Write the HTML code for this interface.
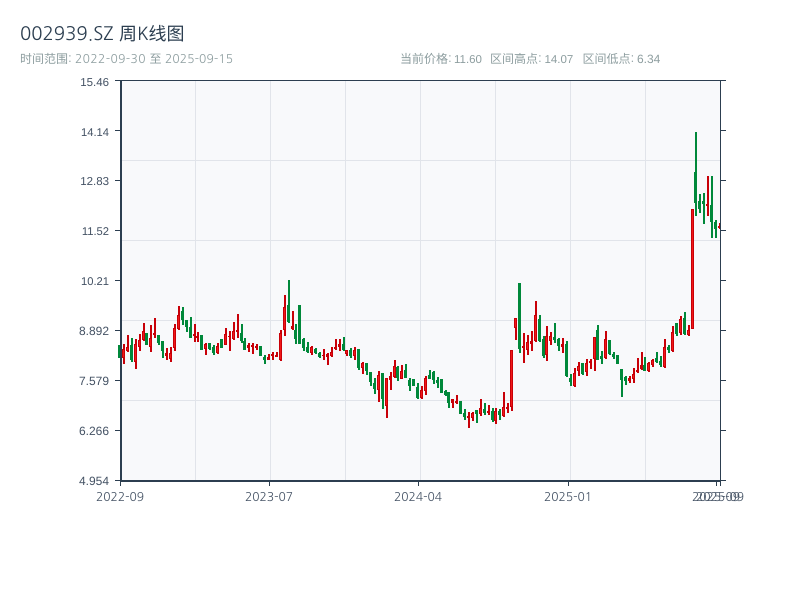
<!DOCTYPE html>
<html lang="zh"><head><meta charset="utf-8"><title>002939.SZ 周K线图</title>
<style>html,body{margin:0;padding:0;background:#fff}svg{display:block}text{font-family:NanumGothic,"WenQuanYi Zen Hei","Noto Sans CJK SC",sans-serif;text-rendering:geometricPrecision}text.n{font-family:"Liberation Sans",sans-serif}</style></head>
<body>
<svg width="800" height="600" viewBox="0 0 800 600" xmlns="http://www.w3.org/2000/svg">
<rect width="800" height="600" fill="#fff"/>
<rect x="120" y="80" width="600" height="400" fill="#f8f9fb"/>
<path d="M195.5 80V480M270.5 80V480M345.5 80V480M420.5 80V480M495.5 80V480M570.5 80V480M645.5 80V480M120 160.5H720M120 240.5H720M120 320.5H720M120 400.5H720" stroke="#e1e4ea" fill="none" shape-rendering="crispEdges"/>
<g fill="none" shape-rendering="crispEdges">
<path stroke="#00883a" stroke-width="2" d="M120 345V358M132 338V362M147 333V345M159 335V345M163 341V358M183 307V325M187 320V332M191 317V338M202 335V350M210 343V350M214 345V355M222 339V348M242 324V343M245 338V350M261 346V356M265 355V364M289 280V323M296 324V344M300 305V344M304 338V351M308 342V353M316 348V354M320 352V358M344 337V351M351 348V358M359 349V370M367 363V375M371 372V386M375 378V394M383 373V409M398 366V381M406 364V378M410 378V391M414 379V386M418 383V399M430 370V379M434 371V384M438 377V388M442 379V393M446 390V396M449 392V408M461 401V414M465 409V420M477 410V423M485 403V415M493 408V422M500 409V420M520 283V353M540 315V342M544 336V358M555 323V343M559 338V351M567 341V377M571 374V386M583 363V375M598 325V360M602 351V364M610 340V355M614 352V359M618 355V364M622 369V397M626 376V385M645 357V371M657 352V363M661 356V367M669 345V353M677 323V336M685 312V335M696 132V216M700 194V213M704 193V224M712 176V238M716 220V238"/>
<path stroke="#00883a" stroke-width="3" d="M119.500 345V358M131.500 345V360M146.500 333V345M158.500 335V343M162.500 341V351M182.500 311V320M186.500 320V327M190.500 327V338M201.500 335V350M209.500 343V349M213.500 347V353M221.500 339V348M241.500 333V341M244.500 341V350M260.500 346V356M264.500 357V360M288.500 305V322M295.500 330V339M299.500 305V344M303.500 339V348M307.500 347V352M315.500 349V353M319.500 353V357M343.500 344V350M350.500 350V356M358.500 349V368M366.500 363V371M370.500 372V382M374.500 383V389M382.500 373V399M397.500 367V378M405.500 370V378M409.500 380V386M413.500 379V386M417.500 387V398M429.500 375V379M433.500 372V380M437.500 380V383M441.500 379V393M445.500 391V395M448.500 392V403M460.500 401V414M464.500 413V417M476.500 410V414M484.500 409V413M492.500 411V420M499.500 411V415M519.500 283V349M539.500 319V341M543.500 339V356M554.500 337V340M558.500 339V346M566.500 344V376M570.500 378V382M582.500 363V374M597.500 330V360M601.500 356V359M609.500 340V354M613.500 354V357M617.500 355V364M621.500 369V380M625.500 377V381M644.500 365V371M656.500 358V362M660.500 361V365M668.500 347V350M676.500 323V334M684.500 318V334M695.500 172V203M699.500 201V209M703.500 201V204M711.500 205V222M715.500 222V229"/>
<path stroke="#c80008" stroke-width="2" d="M124 344V364M128 335V352M136 339V369M140 334V351M144 323V341M151 325V352M155 318V338M167 348V360M171 347V362M175 324V351M179 306V330M195 324V342M198 332V342M206 343V355M218 343V354M226 328V345M230 331V351M234 322V340M238 314V338M249 343V352M253 343V354M257 344V350M269 354V360M273 352V360M277 352V357M281 330V361M285 295V336M293 311V330M312 346V355M324 349V360M328 353V365M332 347V357M336 339V350M340 339V351M347 350V356M355 347V360M363 362V374M379 371V402M387 378V418M391 372V390M395 360V378M402 365V379M422 386V399M426 376V395M453 399V408M457 395V404M469 412V428M473 412V421M481 399V416M489 405V415M496 408V424M504 392V417M508 403V413M512 350V411M516 318V340M524 333V363M528 335V355M532 331V351M536 301V342M547 326V361M551 332V345M563 338V353M575 368V387M579 362V376M587 359V376M591 359V369M595 337V371M606 331V359M630 376V383M634 368V383M638 358V373M642 352V370M649 362V372M653 359V367M665 339V368M673 326V352M681 316V335M689 325V336M693 209V329M708 176V216M720 223V229"/>
<path stroke="#c80008" stroke-width="3" d="M123.500 349V358M127.500 347V351M135.500 344V362M139.500 340V347M143.500 331V340M150.500 338V347M154.500 333V335M166.500 353V356M170.500 353V359M174.500 328V348M178.500 315V329M194.500 334V336M197.500 336V338M205.500 344V349M217.500 346V353M225.500 334V345M229.500 336V337M233.500 331V339M237.500 330V332M248.500 345V348M252.500 345V347M256.500 346V348M268.500 357V360M272.500 354V356M276.500 355V357M280.500 333V360M284.500 307V330M292.500 326V329M311.500 347V353M323.500 355V356M327.500 354V357M331.500 352V356M335.500 347V349M339.500 344V347M346.500 350V354M354.500 350V356M362.500 363V368M378.500 375V390M386.500 378V406M390.500 376V380M394.500 366V377M401.500 371V379M421.500 390V398M425.500 378V391M452.500 399V403M456.500 401V403M468.500 416V418M472.500 413V418M480.500 408V414M488.500 411V413M495.500 411V421M503.500 407V416M507.500 407V409M511.500 350V407M515.500 318V328M523.500 346V348M527.500 342V350M531.500 341V344M535.500 315V341M546.500 336V355M550.500 336V341M562.500 344V347M574.500 373V386M578.500 366V371M586.500 363V372M590.500 361V363M594.500 337V359M605.500 339V358M629.500 378V381M633.500 374V379M637.500 370V372M641.500 365V369M648.500 363V371M652.500 360V365M664.500 347V367M672.500 332V351M680.500 319V333M688.500 330V335M692.500 209V329M707.500 204V206M719.500 226V228"/>
<path stroke="#f01818" stroke-width="1" d="M123.500 350V357M127.500 348V350M135.500 345V361M139.500 341V346M143.500 332V339M150.500 339V346M170.500 354V358M174.500 329V347M178.500 316V328M205.500 345V348M217.500 347V352M225.500 335V344M233.500 332V338M280.500 334V359M284.500 308V329M311.500 348V352M331.500 353V355M346.500 351V353M354.500 351V355M362.500 364V367M378.500 376V389M386.500 379V405M394.500 367V376M401.500 372V378M421.500 391V397M425.500 379V390M472.500 414V417M480.500 409V413M495.500 412V420M503.500 408V415M511.500 351V406M515.500 319V327M527.500 343V349M535.500 316V340M546.500 337V354M550.500 337V340M574.500 374V385M578.500 367V370M586.500 364V371M594.500 338V358M605.500 340V357M633.500 375V378M648.500 364V370M652.500 361V364M664.500 348V366M672.500 333V350M680.500 320V332M688.500 331V334M692.500 210V328"/>
</g>
<g shape-rendering="crispEdges" fill="none" stroke="#2c3e50">
<path d="M115 80.500H726M115 130.500H120M115 180.500H120M115 230.500H120M115 280.500H120M115 330.500H120M115 380.500H120M115 430.500H120M115 480.500H120M720.500 130.500H726M720.500 180.500H726M720.500 230.500H726M720.500 280.500H726M720.500 330.500H726M720.500 380.500H726M720.500 430.500H726M720.500 480.500H726M720.500 80V486M269.500 482V486M418.500 482V486M568.500 482V486M716.500 482V486M120.500 482V486"/>
<path stroke-width="2" d="M121 80V482M120 481H721"/>
</g>
<g fill="#2c3e50">
<text x="20" y="40" font-size="18.6">002939.SZ</text>
<text x="119" y="40" font-size="18">周K线图</text>
</g>
<g font-size="12" fill="#8e9ea0">
<text x="20" y="63">时间范围:</text>
<text x="75" y="63" textLength="70.5">2022-09-30</text>
<text x="149.5" y="63">至</text>
<text x="165" y="63" textLength="68">2025-09-15</text>
<text x="400" y="63">当前价格:</text>
<text class="n" x="454" y="63" font-size="11.5">11.60</text>
<text x="490" y="63">区间高点:</text>
<text class="n" x="544.5" y="63" font-size="11.5">14.07</text>
<text x="582.5" y="63">区间低点:</text>
<text class="n" x="637" y="63">6.34</text>
</g>
<g fill="#445264" text-anchor="end">
<text class="n" x="109" y="86" font-size="11.5">15.46</text><text class="n" x="109" y="136" font-size="11.2">14.14</text><text class="n" x="109" y="185" font-size="11.5">12.83</text><text class="n" x="109" y="235" font-size="11.2">11.52</text><text class="n" x="109" y="285" font-size="11.2">10.21</text><text class="n" x="109" y="335" font-size="12">8.892</text><text class="n" x="109" y="385" font-size="12">7.579</text><text class="n" x="109" y="435" font-size="12">6.266</text><text class="n" x="109" y="485" font-size="12">4.954</text>
</g>
<g font-size="12" fill="#445264" text-anchor="middle">
<text x="120" y="501">2022-09</text><text x="269" y="501">2023-07</text><text x="418" y="501">2024-04</text><text x="568" y="501">2025-01</text><text x="716" y="501">2025-09</text><text x="720" y="501">2025-09</text>
</g>
</svg>
</body></html>
